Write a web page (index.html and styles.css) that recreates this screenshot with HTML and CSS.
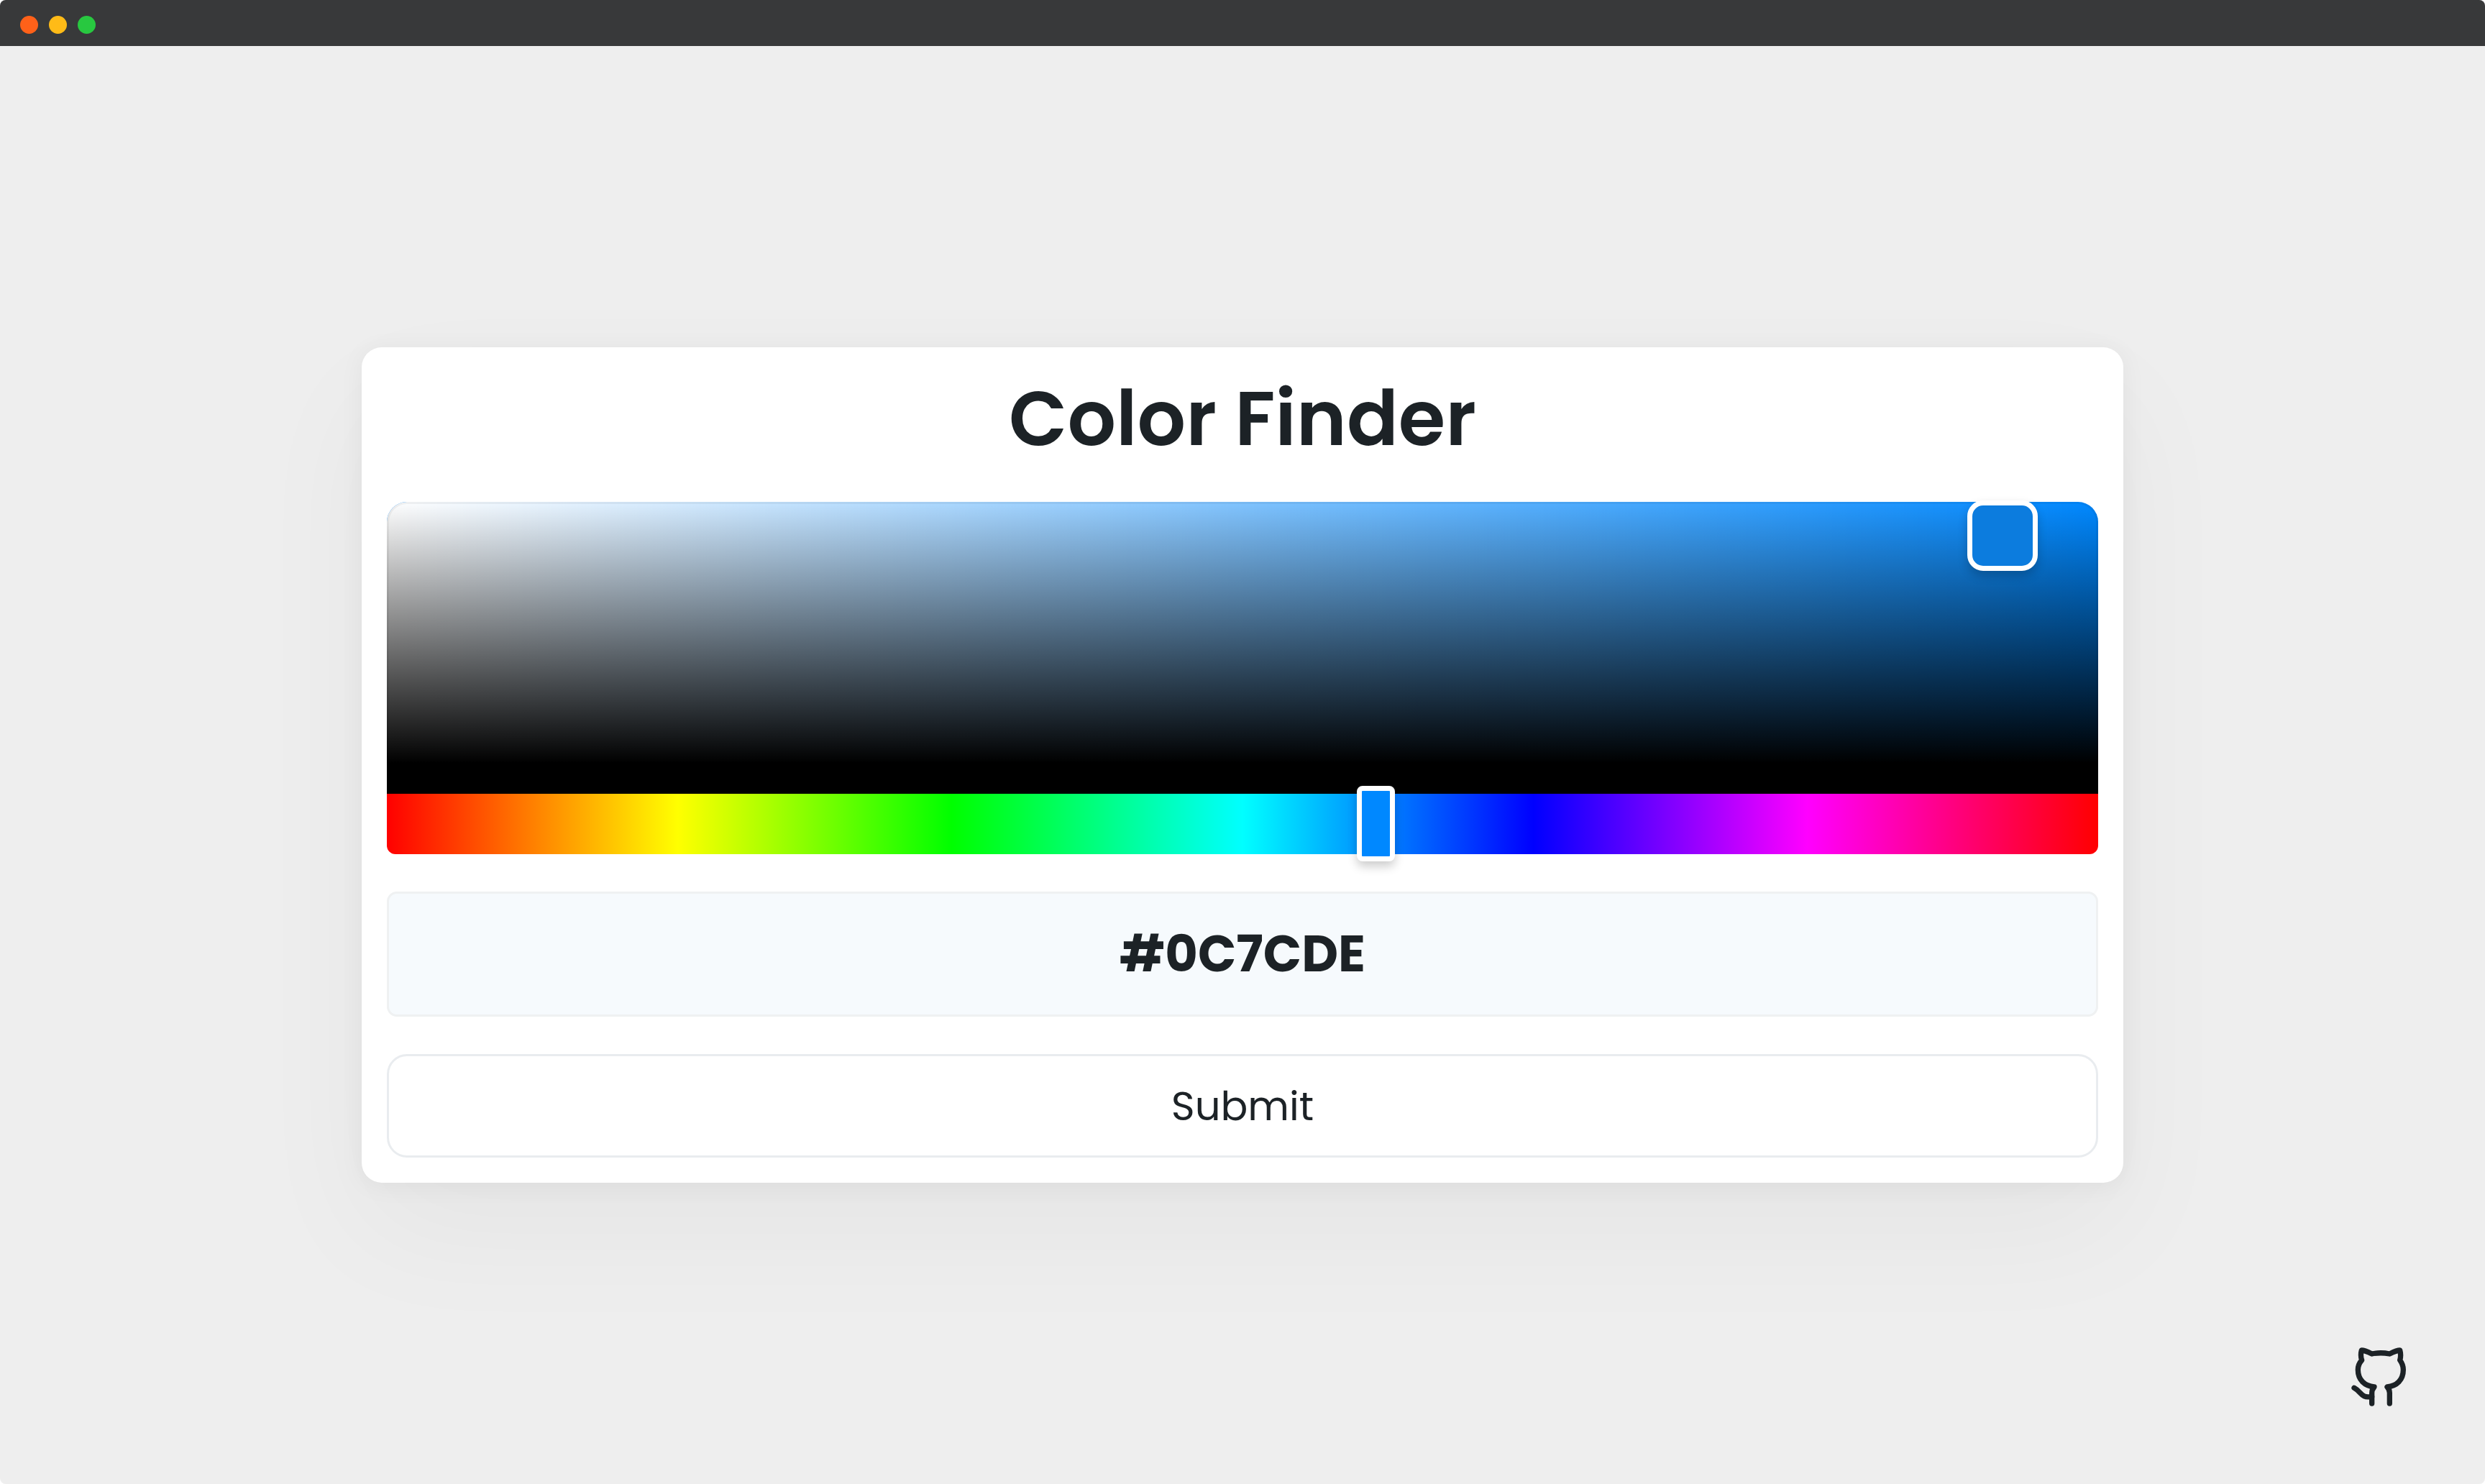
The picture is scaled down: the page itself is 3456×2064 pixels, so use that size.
FILE: index.html
```html
<!DOCTYPE html>
<html lang="en">
<head>
<meta charset="utf-8">
<title>Color Finder</title>
<link rel="stylesheet" href="styles.css">
</head>
<body>
<div class="window">
  <header class="titlebar">
    <span class="light light-close"></span>
    <span class="light light-minimize"></span>
    <span class="light light-zoom"></span>
  </header>
  <main class="stage">
    <form class="card">
      <h1 class="title">Color Finder</h1>
      <div class="picker">
        <div class="saturation">
          <div class="saturation-pointer" role="slider" tabindex="0" aria-label="Color" aria-valuetext="Saturation 95%, brightness 87%"></div>
        </div>
        <input class="hue" type="range" min="0" max="360" step="0.1" value="208.7" aria-label="Hue">
      </div>
      <input class="hex" type="text" value="#0C7CDE" aria-label="Hex color">
      <button class="submit" type="submit">Submit</button>
    </form>
  </main>
  <a class="github" href="https://github.com" aria-label="GitHub">
    <svg class="github-icon" viewBox="66 48 294 294" aria-hidden="true">
      <path d="M250 306V262C250 252 248 246 240 237C280 233 307 208 307 165C307 148 301 136 293 125C298 108 296 95 293 84C281 84 268 90 250 99C226 94 200 94 176 99C158 90 146 84 133 84C130 95 128 108 134 125C124 136 118 148 118 165C118 208 146 233 186 237C178 246 176 252 176 262V306"/>
      <path d="M176 277C130 286 134 258 102 241"/>
    </svg>
  </a>
</div>
</body>
</html>
```
FILE: styles.css
```css
* {
  box-sizing: border-box;
}

body {
  margin: 0;
  background: #fff;
  color: #1c2226;
  font-family: Poppins, Inter, "Liberation Sans", sans-serif;
}

.window {
  position: relative;
  display: flex;
  flex-direction: column;
  min-height: 100vh;
  overflow: hidden;
  border-radius: 8px;
  background: #eee;
}

.titlebar {
  display: flex;
  align-items: center;
  gap: 15px;
  height: 64px;
  padding: 4px 28px 0;
  background: #38393a;
}

.light {
  width: 25px;
  height: 25px;
  border-radius: 50%;
}

.light-close { background: #ff6119; }
.light-minimize { background: #ffbb17; }
.light-zoom { background: #28c840; }

.stage {
  flex: 1;
  display: grid;
  place-items: center;
}

.card {
  display: flex;
  flex-direction: column;
  gap: 52px;
  width: calc(100% - 160px);
  max-width: 2450px;
  padding: 35px;
  border-radius: 28px;
  background: #fff;
  box-shadow: 0 70px 175px rgba(0, 0, 0, 0.04), 0 4px 35px rgba(0, 0, 0, 0.05);
}

.title {
  margin: 0;
  font-size: 106px;
  font-weight: 600;
  line-height: 128px;
  text-align: center;
}

.picker {
  display: flex;
  flex-direction: column;
}

.saturation {
  position: relative;
  height: 406px;
  border-bottom: 42px solid #000;
  border-radius: 28px 28px 0 0;
  background: linear-gradient(0deg, #000, transparent), linear-gradient(90deg, #fff, transparent), #08f;
  box-shadow: inset 0 0 0 3px rgba(0, 0, 0, 0.05);
}

.saturation-pointer {
  position: absolute;
  left: 94.4%;
  top: 13%;
  width: 98px;
  height: 98px;
  transform: translate(-50%, -50%);
  border: 7px solid #fff;
  border-radius: 22px;
  background: #0c7cde;
  box-shadow: 0 7px 14px rgba(0, 0, 0, 0.2);
}

.hue {
  appearance: none;
  position: relative;
  width: 100%;
  height: 84px;
  margin: 0;
  border-radius: 0 0 12px 12px;
  background: linear-gradient(90deg, #f00 0%, #ff0 17%, #0f0 33%, #0ff 50%, #00f 67%, #f0f 83%, #f00 100%);
}

.hue::-webkit-slider-runnable-track {
  height: 84px;
}

.hue::-webkit-slider-thumb {
  appearance: none;
  width: 53px;
  height: 105px;
  margin-top: -11px;
  border: 7px solid #fff;
  border-radius: 8px;
  background: #08f;
  box-shadow: 0 7px 14px rgba(0, 0, 0, 0.2);
}

.hex {
  width: 100%;
  height: 174px;
  padding: 0 35px;
  border: 3px solid #eff1f2;
  border-radius: 14px;
  background: #f6fafd;
  color: inherit;
  font: inherit;
  font-size: 70px;
  font-weight: 700;
  text-align: center;
}

.submit {
  height: 144px;
  padding: 0 35px;
  border: 3px solid #e9ecef;
  border-radius: 28px;
  background: #fff;
  color: inherit;
  font: inherit;
  font-size: 56px;
}

.github {
  position: absolute;
  right: 96px;
  bottom: 100px;
  color: inherit;
}

.github-icon {
  display: block;
  width: 98px;
  height: 98px;
  fill: none;
  stroke: currentColor;
  stroke-width: 22;
  stroke-linecap: round;
  stroke-linejoin: round;
}
```
